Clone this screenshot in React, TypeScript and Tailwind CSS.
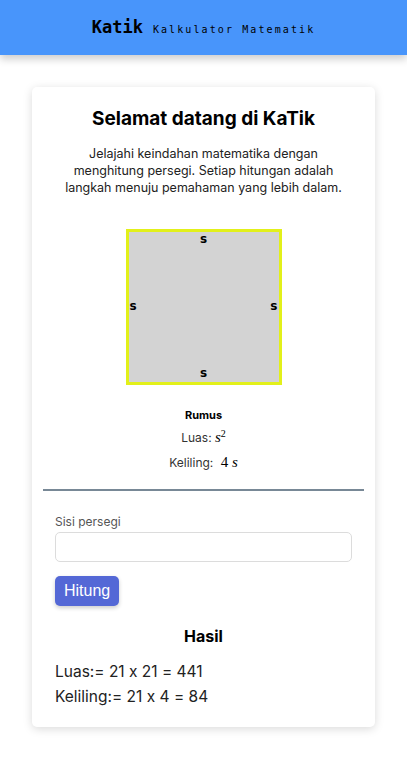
import { useState } from 'react'

function Header() {
  return (
    <header className="flex h-[55px] items-center justify-center bg-[#4895fb] shadow-[0_4px_8px_rgba(0,0,0,0.2)]">
      <div className="flex items-baseline gap-[10px] font-['DejaVu_Sans_Mono',monospace] text-black">
        <span className="text-[17px] font-bold">Katik</span>
        <span className="text-[10px] tracking-[2.1px]">Kalkulator Matematik</span>
      </div>
    </header>
  )
}

function SquareFigure() {
  return (
    <div className="mx-auto mt-[33px] flex h-[156px] w-[156px] flex-col justify-between border-[3px] border-[#e2f01a] bg-[#d3d3d3] font-['DejaVu_Sans',sans-serif] text-[12px] font-bold text-black">
      <div className="text-center leading-[14px]">s</div>
      <div className="flex justify-between px-[1px] leading-[14px]">
        <span>s</span>
        <span>s</span>
      </div>
      <div className="mb-[2px] text-center leading-[14px]">s</div>
    </div>
  )
}

function Formula() {
  return (
    <div className="mt-[22px] text-center text-[12px] text-[#333]">
      <div className="text-[11px] font-bold text-black">Rumus</div>
      <div className="mt-[3px]">
        Luas:{' '}
        <span className="font-['Liberation_Serif',serif] text-[15px] italic text-black">
          s<sup className="text-[10px] not-italic">2</sup>
        </span>
      </div>
      <div className="mt-[2px]">
        Keliling:{' '}
        <span className="ml-[4px] font-['Liberation_Serif',serif] text-[15px] text-black">
          4 <i>s</i>
        </span>
      </div>
    </div>
  )
}

export default function App() {
  const [side, setSide] = useState('')
  const n = 21

  return (
    <div className="min-h-[757px] bg-white font-['Inter',sans-serif] [font-feature-settings:'calt'_0]">
      <Header />
      <main className="px-[32px] pt-[32px] pb-[32px]">
        <div className="rounded-[5px] bg-white px-[11px] pt-[18px] pb-[18px] shadow-[0_2px_10px_rgba(0,0,0,0.15)]">
          <h1 className="text-center text-[19px] font-bold text-black">Selamat datang di KaTik</h1>
          <p className="mx-auto mt-[11px] w-[280px] text-center text-[12.5px] leading-[17px] text-[#222]">
            Jelajahi keindahan matematika dengan menghitung persegi. Setiap hitungan adalah langkah menuju pemahaman yang lebih dalam.
          </p>
          <SquareFigure />
          <Formula />
          <hr className="mt-[16px] border-t-2 border-[#788896]" />
          <div className="px-[12px] pt-[22px]">
            <label className="block text-[12px] text-[#555]">Sisi persegi</label>
            <input
              value={side}
              onChange={(e) => setSide(e.target.value)}
              className="mt-[1px] h-[30px] w-full rounded-[5px] border border-[#dcdcdc] px-2 text-sm outline-none"
            />
            <button className="mt-[14px] h-[30px] rounded-[5px] bg-[#5468d6] px-[9px] font-['Liberation_Sans',sans-serif] text-[16px] text-white shadow-[0_2px_4px_rgba(0,0,0,0.2)]">
              Hitung
            </button>
            <h2 className="mt-[18px] text-center text-[16px] font-bold text-black">Hasil</h2>
            <div className="mt-[11px] text-[15.5px] leading-[25px] text-[#222]">
              <div>Luas:= {n} x {n} = {n * n}</div>
              <div>Keliling:= {n} x 4 = {n * 4}</div>
            </div>
          </div>
        </div>
      </main>
    </div>
  )
}
